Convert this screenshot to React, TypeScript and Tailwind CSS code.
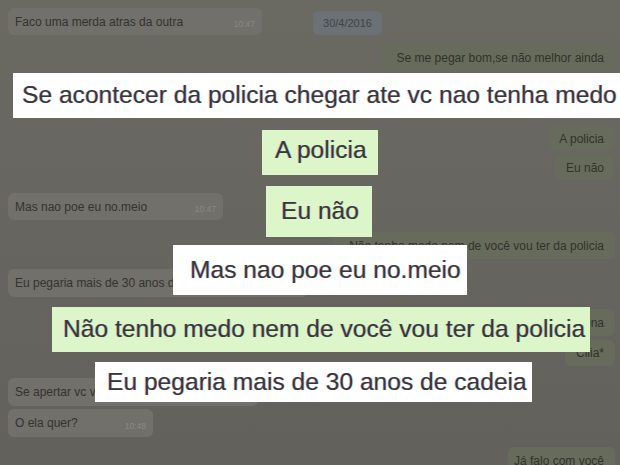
import React from "react";

const font = { fontFamily: '"Liberation Sans", Arial, sans-serif' };

function Left({ text, w, h, mt, time, textCls = "" }: { text: string; w: string; h: string; mt: string; time?: string; textCls?: string }) {
  return (
    <div className={`flex ${mt}`}>
      <div className={`ml-[8px] ${w} ${h} relative rounded-[6px] bg-[#71706a] flex items-center pl-[7px] overflow-hidden`}>
        <span className={`text-[12px] text-[#34332f] whitespace-nowrap ${textCls}`}>{text}</span>
        {time && (
          <span className="absolute right-[7px] bottom-[4px] text-[8.5px] text-[#8a8983]">{time}</span>
        )}
      </div>
    </div>
  );
}

function Right({ text, w, h, mt }: { text: string; w: string; h: string; mt: string }) {
  return (
    <div className={`flex justify-end ${mt}`}>
      <div className={`mr-[5px] ${w} ${h} rounded-[6px] bg-[#676b5c] flex items-center justify-end pr-[11px] overflow-hidden`}>
        <span className="text-[12px] text-[#30332a] whitespace-nowrap">{text}</span>
      </div>
    </div>
  );
}

const cap =
  "flex items-center whitespace-nowrap text-[24.6px] text-[#383838] [text-shadow:-0.7px_0_0_rgba(210,40,110,0.35),0.7px_0_0_rgba(40,150,230,0.35)]";

export default function App() {
  return (
    <div
      className="relative w-[620px] h-[465px] overflow-hidden bg-gradient-to-b from-[#6a6962] to-[#62615c]"
      style={font}
    >
      {/* underlying chat */}
      <div className="flex flex-col pt-[8px]">
        <div className="flex items-start">
          <div className="ml-[8px] w-[254px] h-[27px] relative rounded-[6px] bg-[#71706a] flex items-center pl-[7px]">
            <span className="text-[12px] text-[#34332f] whitespace-nowrap">Faco uma merda atras da outra</span>
            <span className="absolute right-[7px] bottom-[4px] text-[8.5px] text-[#8a8983]">10:47</span>
          </div>
          <div className="ml-[51px] mt-[3px] w-[69px] h-[24px] rounded-[5px] bg-[#6b7175] flex items-center justify-center">
            <span className="text-[11px] text-[#3f4447]">30/4/2016</span>
          </div>
        </div>
        <Right text="Se me pegar bom,se não melhor ainda" w="w-[235px]" h="h-[26px]" mt="mt-[10px]" />
        <Right text="A policia" w="w-[66px]" h="h-[25px]" mt="mt-[55px]" />
        <Right text="Eu não" w="w-[60px]" h="h-[25px]" mt="mt-[4px]" />
        <Left text="Mas nao poe eu no.meio" w="w-[215px]" h="h-[27px]" mt="mt-[13px]" time="10:47" />
        <Right text="Não tenho medo nem de você vou ter da policia" w="w-[282px]" h="h-[27px]" mt="mt-[12px]" />
        <Left text="Eu pegaria mais de 30 anos de cadeia" w="w-[300px]" h="h-[28px]" mt="mt-[10px]" time="10:47" />
        <Right text="Não tenho pena" w="w-[300px]" h="h-[27px]" mt="mt-[12px]" />
        <Right text="Cilia*" w="w-[50px]" h="h-[26px]" mt="mt-[4px]" />
        <Left text="Se apertar vc vai falar" w="w-[250px]" h="h-[28px]" mt="mt-[12px]" time="10:48" />
        <Left text="O ela quer?" w="w-[145px]" h="h-[28px]" mt="mt-[3px]" time="10:48" />
        <Right text="Já falo com você" w="w-[107px]" h="h-[28px]" mt="mt-[10px]" />
      </div>

      {/* caption overlay */}
      <div className="absolute inset-0 flex flex-col items-start pt-[73px]">
        <div className={`${cap} ml-[13px] w-[640px] h-[45px] pl-[9px] bg-white`}>
          Se acontecer da policia chegar ate vc nao tenha medo
        </div>
        <div className={`${cap} ml-[262px] mt-[12px] w-[116px] h-[45px] pl-[13px] pb-[5px] bg-[#dcf6c9]`}>
          A policia
        </div>
        <div className={`${cap} ml-[266px] mt-[11px] w-[106px] h-[51px] pl-[15px] bg-[#dcf6c9]`}>
          Eu não
        </div>
        <div className={`${cap} ml-[173px] mt-[8px] w-[294px] h-[50px] pl-[17px] bg-white`}>
          Mas nao poe eu no.meio
        </div>
        <div className={`${cap} ml-[52px] mt-[12px] w-[538px] h-[45px] pl-[11px] bg-[#dcf6c9]`}>
          Não tenho medo nem de você vou ter da policia
        </div>
        <div className={`${cap} ml-[95px] mt-[10px] w-[437px] h-[40px] pl-[12px] bg-white`}>
          Eu pegaria mais de 30 anos de cadeia
        </div>
      </div>
    </div>
  );
}
